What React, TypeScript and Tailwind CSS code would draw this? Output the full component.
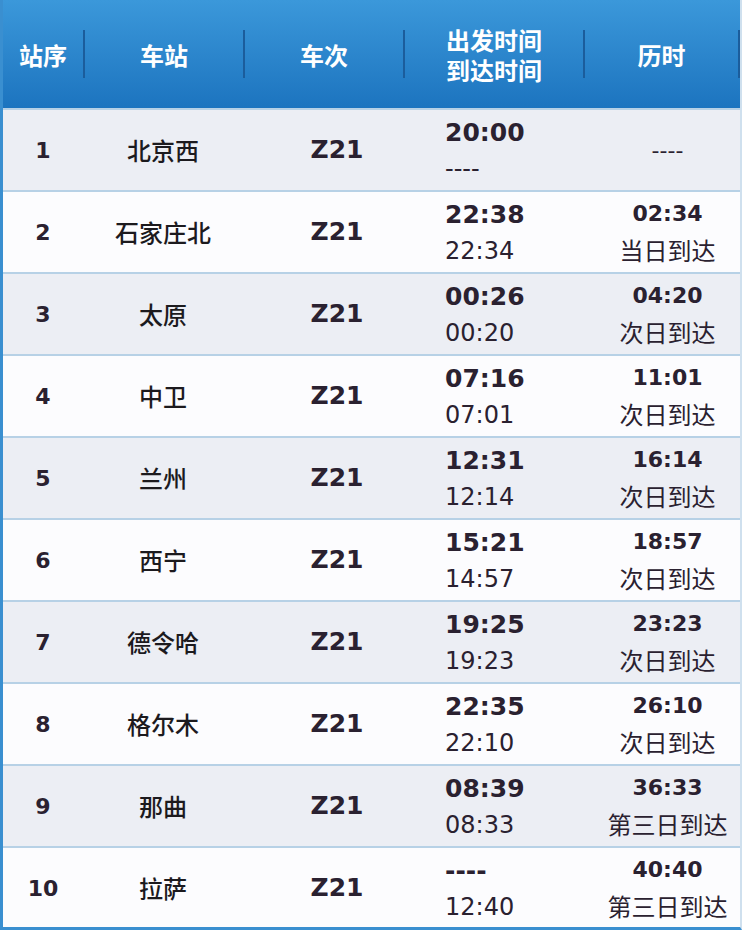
import React from "react";

type Row = { n: string; st: string; dep: string; arr: string; dur: string; note: string };

const rows: Row[] = [
  { n: "1", st: "北京西", dep: "20:00", arr: "----", dur: "----", note: "" },
  { n: "2", st: "石家庄北", dep: "22:38", arr: "22:34", dur: "02:34", note: "当日到达" },
  { n: "3", st: "太原", dep: "00:26", arr: "00:20", dur: "04:20", note: "次日到达" },
  { n: "4", st: "中卫", dep: "07:16", arr: "07:01", dur: "11:01", note: "次日到达" },
  { n: "5", st: "兰州", dep: "12:31", arr: "12:14", dur: "16:14", note: "次日到达" },
  { n: "6", st: "西宁", dep: "15:21", arr: "14:57", dur: "18:57", note: "次日到达" },
  { n: "7", st: "德令哈", dep: "19:25", arr: "19:23", dur: "23:23", note: "次日到达" },
  { n: "8", st: "格尔木", dep: "22:35", arr: "22:10", dur: "26:10", note: "次日到达" },
  { n: "9", st: "那曲", dep: "08:39", arr: "08:33", dur: "36:33", note: "第三日到达" },
  { n: "10", st: "拉萨", dep: "----", arr: "12:40", dur: "40:40", note: "第三日到达" },
];

const cjk = "font-['Noto_Sans_CJK_SC',sans-serif]";
const num = "font-['DejaVu_Sans','Noto_Sans_CJK_SC',sans-serif]";

function Sep() {
  return <div className="w-[2px] h-[48px] bg-[#1b5d9c] shrink-0" />;
}

export default function App() {
  return (
    <div className="w-[742px] h-[930px] bg-white">
      <div className="w-[742px] h-[930px] border-l-[3px] border-b-[3px] border-r-[2px] border-l-[#3a8fd0] border-b-[#3a8fd0] border-r-[#cfe0ee] flex flex-col overflow-hidden">
        {/* header */}
        <div
          className={`h-[108px] shrink-0 flex items-center bg-gradient-to-b from-[#3b98da] to-[#1c74bf] text-white font-bold text-[24px] leading-[28px] ${cjk}`}
        >
          <div className="w-[80px] text-center pt-[2px]">站序</div>
          <Sep />
          <div className="w-[158px] text-center pt-[2px]">车站</div>
          <Sep />
          <div className="w-[158px] text-center pt-[2px]">车次</div>
          <Sep />
          <div className="w-[178px] flex flex-col items-center gap-[2px] pt-[2px]">
            <div className="leading-[28px]">出发时间</div>
            <div className="leading-[28px]">到达时间</div>
          </div>
          <Sep />
          <div className="w-[153px] text-center pt-[2px]">历时</div>
          <Sep />
        </div>
        {/* rows */}
        {rows.map((r, i) => (
          <div
            key={r.n}
            className={`h-[82px] shrink-0 grid grid-cols-[80px_160px_160px_180px_1fr] items-center border-t-[2px] border-[#b7d1e6] text-[#2a2130] ${
              i % 2 === 0 ? "bg-[#eceef4]" : "bg-[#fcfcfe]"
            } ${i === 0 ? "border-t-0" : ""}`}
          >
            <div className={`text-center font-bold text-[22px] ${num}`}>{r.n}</div>
            <div className={`text-center text-[24px] font-medium text-[#1c1a1e] ${cjk}`}>{r.st}</div>
            <div className={`text-center pl-[28px] font-bold text-[25px] ${num}`}>Z21</div>
            <div className={`pl-[42px] ${num} flex flex-col`}>
              <div className="font-bold text-[25px] leading-[34px] mt-[2px]">{r.dep}</div>
              <div className="text-[24px] leading-[34px] mt-[2px]">{r.arr}</div>
            </div>
            <div className={`text-center pl-[12px] ${num} flex flex-col`}>
              {r.note ? (
                <>
                  <div className="font-bold text-[22px] leading-[34px]">{r.dur}</div>
                  <div className={`text-[24px] leading-[34px] mt-[2px] ${cjk}`}>{r.note}</div>
                </>
              ) : (
                <div className="text-[22px]">{r.dur}</div>
              )}
            </div>
          </div>
        ))}
      </div>
    </div>
  );
}
